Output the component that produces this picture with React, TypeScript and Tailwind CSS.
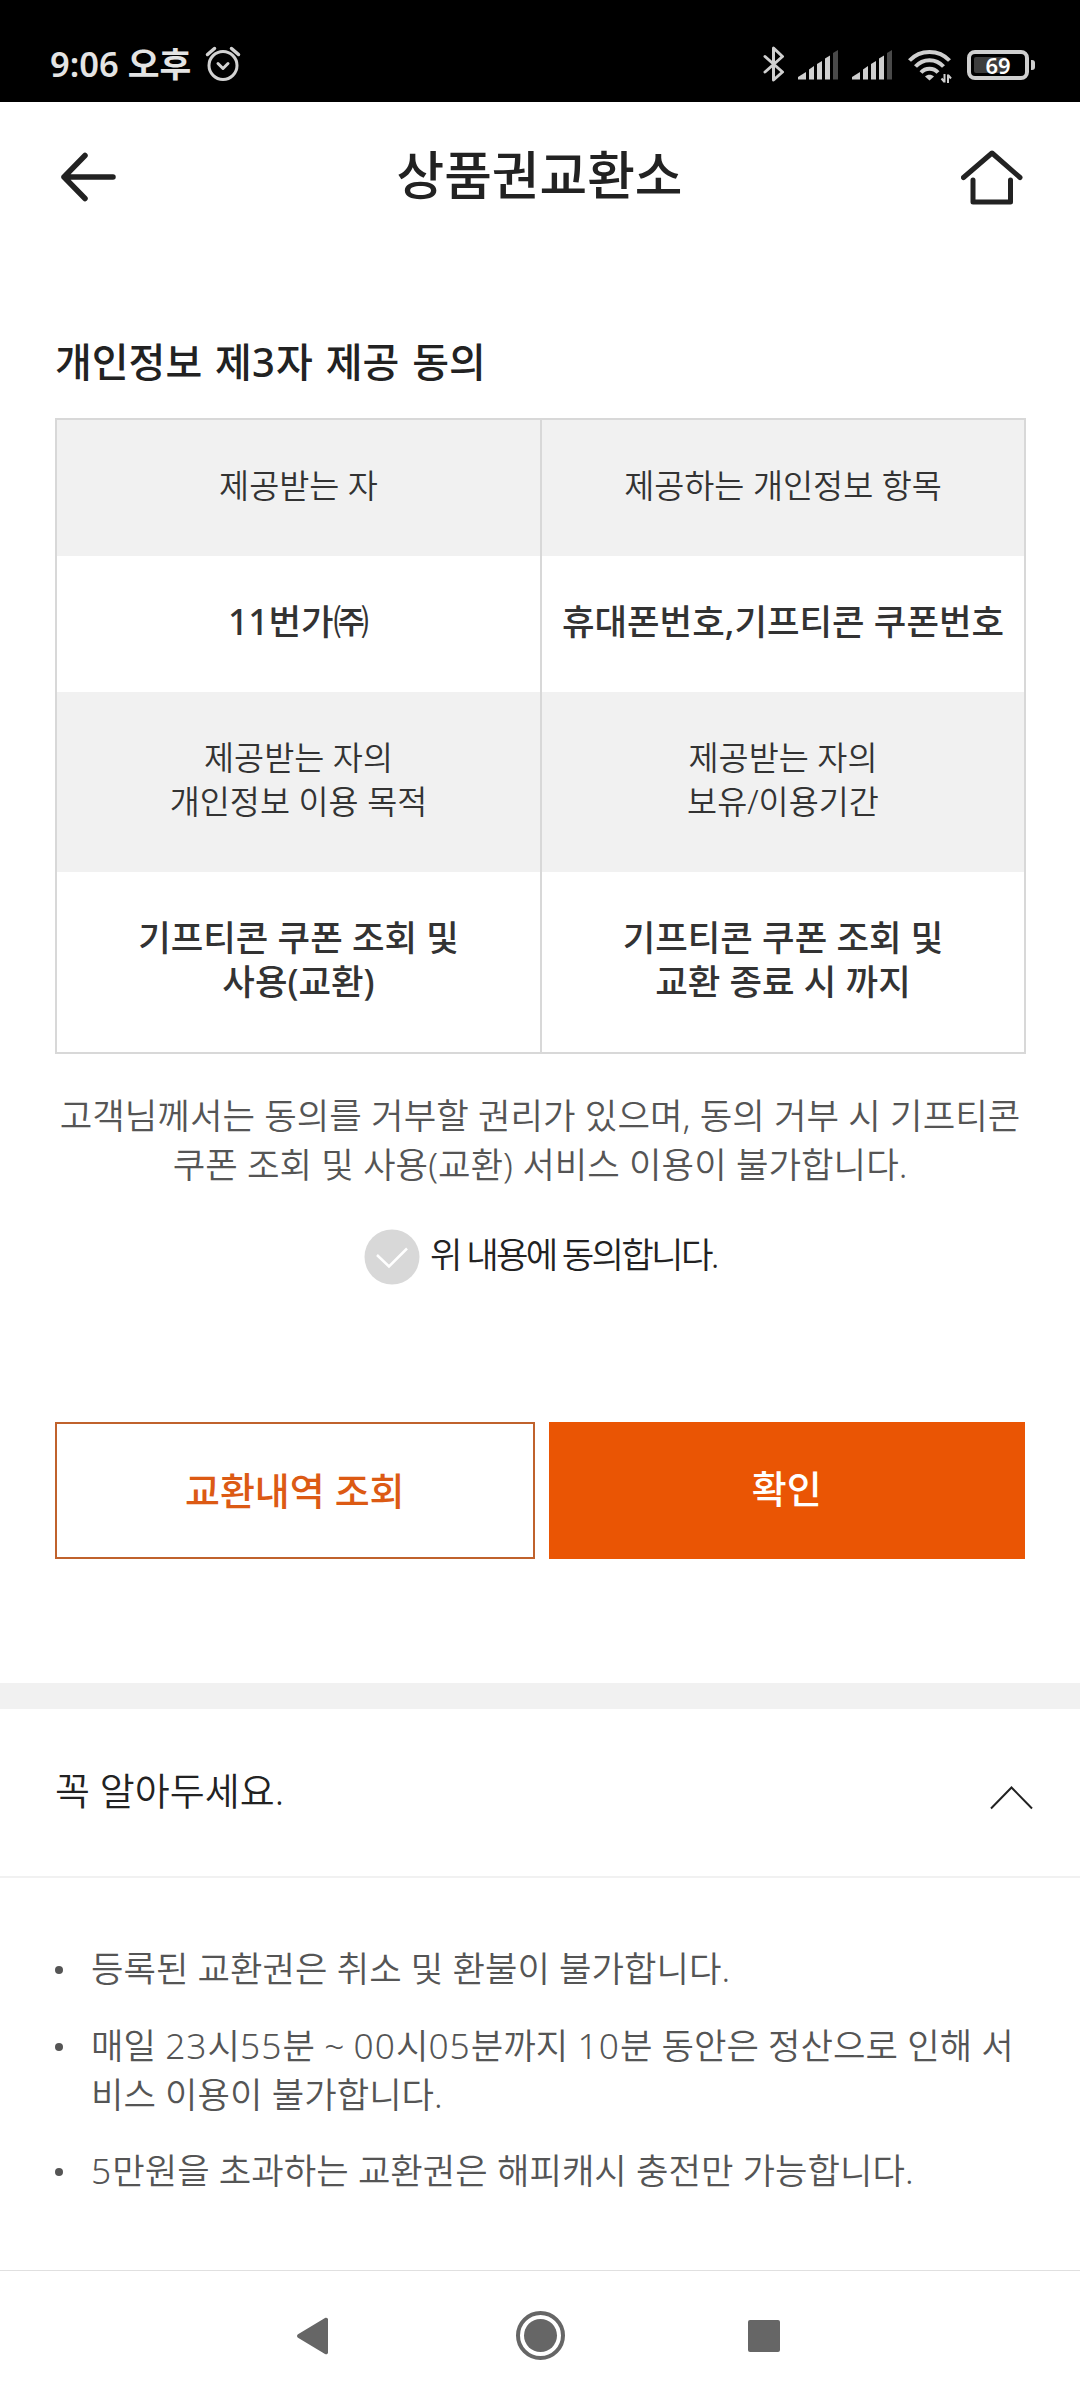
import { Fragment, useState, type ReactNode } from 'react';

const NOTICES = [
  ['등록된 교환권은 취소 및 환불이 불가합니다.'],
  ['매일 23시55분 ~ 00시05분까지 10분 동안은 정산으로 인해 서', '비스 이용이 불가합니다.'],
  ['5만원을 초과하는 교환권은 해피캐시 충전만 가능합니다.'],
];

export default function App() {
  const [agreed, setAgreed] = useState(false);
  const [open, setOpen] = useState(true);

  return (
    <div className="flex h-[2400px] w-[1080px] flex-col overflow-hidden bg-white font-['Noto_Sans','Noto_Sans_CJK_KR',sans-serif] text-[#222]">
      <StatusBar />

      <header className="flex h-[142px] shrink-0 items-center justify-between pr-[57px] pl-[58px]">
        <button type="button" aria-label="뒤로" className="mt-[7px]">
          <BackIcon />
        </button>
        <h1 className="mt-[3px] text-[51.8px] leading-[60px] font-medium">상품권교환소</h1>
        <button type="button" aria-label="홈" className="mt-[8px]">
          <HomeIcon />
        </button>
      </header>

      <main className="flex flex-1 flex-col">
        <section className="flex flex-col px-[55px] pt-[88px]">
          <h2 className="h-[86px] text-[40px] leading-[60px] font-medium [word-spacing:2.5px]">
            <Digits text="개인정보 제3자 제공 동의" />
          </h2>

          <div className="grid w-[971px] grid-cols-[483px_1fr] border-2 border-[#d8d8d8]">
            <HeadCell className="h-[136px]">제공받는 자</HeadCell>
            <HeadCell className="h-[136px] border-l-2">제공하는 개인정보 항목</HeadCell>
            <BodyCell className="h-[136px]">11번가㈜</BodyCell>
            <BodyCell className="h-[136px] border-l-2">휴대폰번호,기프티콘 쿠폰번호</BodyCell>
            <HeadCell className="h-[180px]">
              제공받는 자의
              <br />
              개인정보 이용 목적
            </HeadCell>
            <HeadCell className="h-[180px] border-l-2">
              제공받는 자의
              <br />
              보유/이용기간
            </HeadCell>
            <BodyCell className="h-[180px]">
              기프티콘 쿠폰 조회 및
              <br />
              사용(교환)
            </BodyCell>
            <BodyCell className="h-[180px] border-l-2">
              기프티콘 쿠폰 조회 및
              <br />
              교환 종료 시 까지
            </BodyCell>
          </div>

          <p className="mt-[37px] text-center text-[35.4px] leading-[49px] font-[350] whitespace-nowrap text-[#555]">
            고객님께서는 동의를 거부할 권리가 있으며, 동의 거부 시 기프티콘
            <br />
            쿠폰 조회 및 사용(교환) 서비스 이용이 불가합니다.
          </p>

          <button
            type="button"
            role="checkbox"
            aria-checked={agreed}
            onClick={() => setAgreed(!agreed)}
            className="mt-[40px] ml-[309px] flex h-[56px] items-center gap-[10px]"
          >
            <CheckIcon checked={agreed} />
            <span className="-mt-[6px] text-[35.4px] leading-[50px] font-[350] tracking-[-2.8px]">위 내용에 동의합니다.</span>
          </button>

          <div className="mt-[137px] flex gap-[14px]">
            <button
              type="button"
              className="h-[137px] w-[480px] border-2 border-[#c0622c] text-[38px] font-medium text-[#dc5a14]"
            >
              교환내역 조회
            </button>
            <button type="button" className="h-[137px] w-[477px] bg-[#ea5504] pb-[4px] text-[38px] font-medium text-white">
              확인
            </button>
          </div>
        </section>

        <section className="mt-[124px] border-t-[26px] border-[#f1f1f1]">
          <button
            type="button"
            aria-expanded={open}
            onClick={() => setOpen(!open)}
            className="flex h-[169px] w-full items-center justify-between border-b-2 border-[#f1f1f1] pr-[47px] pl-[55px]"
          >
            <span className="-mt-[6px] text-[38px] leading-[56px] font-[350]">꼭 알아두세요.</span>
            <svg className="mt-[11px]" width="43" height="24" viewBox="0 0 43 24" fill="none" stroke="#222" strokeWidth="2">
              <path d={open ? 'M1 22.5 21.5 1.5 42 22.5' : 'M1 1.5 21.5 22.5 42 1.5'} />
            </svg>
          </button>

          {open && (
            <ul className="flex flex-col gap-[27.500px] px-[55px] pt-[66px]">
              {NOTICES.map((lines) => (
                <li key={lines[0]} className="flex text-[35.3px] leading-[49px] font-[350] text-[#555]">
                  <span className="mt-[22px] mr-[28px] size-[8px] shrink-0 rounded-full bg-[#555]" />
                  <div className="whitespace-nowrap">
                    {lines.map((line) => (
                      <p key={line}>
                        <Digits text={line} />
                      </p>
                    ))}
                  </div>
                </li>
              ))}
            </ul>
          )}
        </section>
      </main>

      <NavigationBar />
    </div>
  );
}

// Numerals are set slightly wider than the Hangul around them.
function Digits({ text }: { text: string }) {
  return text.split(/(\d+)/).map((part, i) =>
    /^\d+$/.test(part) ? (
      <span key={i} className="tracking-[0.03em]">
        {part}
      </span>
    ) : (
      <Fragment key={i}>{part}</Fragment>
    ),
  );
}

function HeadCell({ className, children }: { className: string; children: ReactNode }) {
  return (
    <div
      className={`flex items-center justify-center border-[#d8d8d8] bg-[#f1f1f1] pb-[4px] text-center text-[32.7px] leading-[44px] font-[350] text-[#333] ${className}`}
    >
      <span>{children}</span>
    </div>
  );
}

function BodyCell({ className, children }: { className: string; children: ReactNode }) {
  return (
    <div
      className={`flex items-center justify-center border-[#d8d8d8] pb-[7px] text-center text-[35.4px] leading-[44px] font-medium whitespace-nowrap text-[#333] ${className}`}
    >
      <span>{children}</span>
    </div>
  );
}

function StatusBar() {
  return (
    <div className="flex h-[102px] shrink-0 items-center bg-black pt-[27px] pr-[45px] pl-[50px] text-[#e4e4e4]">
      <span className="-mt-[2px] text-[34.500px] leading-[48px] font-semibold">9:06 오후</span>
      <AlarmIcon />
      <div className="ml-auto flex items-center">
        <BluetoothIcon />
        <SignalIcon className="ml-[13px]" />
        <SignalIcon className="ml-[14px]" />
        <WifiIcon />
        <Battery level={69} />
      </div>
    </div>
  );
}

function AlarmIcon() {
  return (
    <svg className="-mt-[2px] ml-[14px]" width="36" height="36" viewBox="0 0 36 36" fill="none" stroke="#d2d2d2" strokeWidth="3" strokeLinecap="round" strokeLinejoin="round">
      <circle cx="18" cy="19.5" r="14" />
      <path d="m13 17.500 5 5 5-5" />
      <path d="m2.500 8.500 7-6M33.500 8.500l-7-6" strokeWidth="3.500" />
    </svg>
  );
}

function BluetoothIcon() {
  return (
    <svg className="-mt-[2px]" width="22" height="36" viewBox="0 0 22 36" fill="none" stroke="#cfcfcf" strokeWidth="3" strokeLinejoin="round" strokeLinecap="round">
      <path d="M2 10.500 19.500 26 10.500 34V2l9 8.500L2 26" />
    </svg>
  );
}

function SignalIcon({ className }: { className: string }) {
  return (
    <svg className={className} width="40" height="30" viewBox="0 0 40 30" fill="#cfcfcf">
      <path d="M0 29.500V27l8-5v7.500z" />
      <path d="M11 29.500V19.500l5-3.500v13.500z" />
      <path d="M19 29.500V14l5-3v18.500z" />
      <path d="M27 29.500V8.500l5-3v24z" />
      <path d="M35 29.500V3l5-3v29.500z" fill="#4a4a4a" />
    </svg>
  );
}

function WifiIcon() {
  return (
    <svg className="ml-[16px]" width="44" height="36" viewBox="0 0 44 36" fill="none" stroke="#cfcfcf" strokeWidth="4">
      <path d="M1.500 13.500C12 2 31 2 41.500 13.500" />
      <path d="M7.500 19.500C15 11 28 11 35.500 19.500" />
      <path d="M13 25.500c4.500-5 12.500-5 17 0" />
      <path d="m17 29.500c2.500-2.500 6.500-2.500 9 0l-4.500 4z" fill="#cfcfcf" stroke="none" />
      <path d="M36.500 27v8.500M36.500 35l-3-3.500M40 36v-8.500M40 28l3 3.500" strokeWidth="2" />
    </svg>
  );
}

function Battery({ level }: { level: number }) {
  return (
    <div className="ml-[15px] flex items-center gap-[2px]">
      <div className="relative h-[30px] w-[62px] rounded-[8px] border-4 border-[#cfcfcf] p-[3px]">
        <div className="h-full rounded-[2px] bg-[#3d3d3d]" style={{ width: `${level}%` }} />
        <span className="absolute inset-0 text-center text-[22px] leading-[22px] font-semibold text-white">{level}</span>
      </div>
      <div className="h-[10px] w-[4px] rounded-r-[3px] bg-[#cfcfcf]" />
    </div>
  );
}

function BackIcon() {
  return (
    <svg width="60" height="52" viewBox="0 0 60 52" fill="none" stroke="#222" strokeWidth="5.500" strokeLinecap="round" strokeLinejoin="round">
      <path d="M55 26H6M27 4.500 6 26l21 21.500" />
    </svg>
  );
}

function HomeIcon() {
  return (
    <svg width="62" height="56" viewBox="0 0 62 56" fill="none" stroke="#222" strokeWidth="5" strokeLinecap="round" strokeLinejoin="round">
      <path d="M2.500 28.500 31 4l28 24.500" />
      <path d="M12 31v22h37.500V31" />
    </svg>
  );
}

function CheckIcon({ checked }: { checked: boolean }) {
  return (
    <svg width="56" height="56" viewBox="0 0 56 56" fill="none">
      <circle cx="28" cy="28" r="27.500" fill={checked ? '#ea5504' : '#d8d8d8'} />
      <path d="m13 26 12 11.500L43 19.500" stroke="#fff" strokeWidth="2.500" />
    </svg>
  );
}

function NavigationBar() {
  return (
    <nav className="flex h-[130px] shrink-0 items-center border-t border-[#e0e0e0] pl-[297px]">
      <svg width="31" height="38" viewBox="0 0 31 38" fill="#666">
        <path d="M1 17.300 28 1c1.500-.8 3 0 3 1.500v33c0 1.500-1.500 2.300-3 1.500L1 20.700c-1.300-.8-1.300-2.600 0-3.400z" />
      </svg>
      <svg className="ml-[188px]" width="49" height="49" viewBox="0 0 49 49">
        <circle cx="24.500" cy="24.500" r="22.500" fill="none" stroke="#666" strokeWidth="4" />
        <circle cx="24.500" cy="24.500" r="16.500" fill="#666" />
      </svg>
      <div className="ml-[183px] size-[32px] rounded-[2px] bg-[#666]" />
    </nav>
  );
}
